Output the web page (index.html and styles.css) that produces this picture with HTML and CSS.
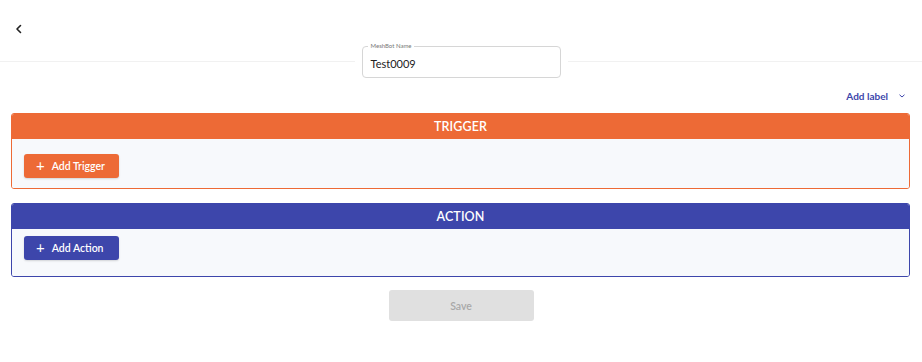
FILE: index.html
```html
<!DOCTYPE html>
<html>
<head>
<title>MeshBot</title>
<link rel="stylesheet" href="styles.css">
</head>
<body>
<div class="top">
    <a href="#back" class="back">
        <svg width="10" height="10" viewBox="0 0 10 10"><path d="M6.5 1.5 L3 5 L6.5 8.5" fill="none" stroke="#222" stroke-width="1.6" stroke-linecap="round" stroke-linejoin="round"/></svg>
    </a>
</div>

<div class="name-row">
    <div class="name-field">
        <span class="name-label">MeshBot Name</span>
        <span class="name-value">Test0009</span>
    </div>
</div>

<div class="label-row">
    <a href="#label" class="add-label">Add label</a>
    <svg class="chev" width="8" height="8" viewBox="0 0 8 8"><path d="M1.8 3 L4 5 L6.2 3" fill="none" stroke="#3d46ab" stroke-width="1" stroke-linecap="round"/></svg>
</div>

<div class="card trigger">
    <div class="card-head">TRIGGER</div>
    <div class="card-body">
        <button class="add-btn"><span class="plus">+</span>Add Trigger</button>
    </div>
</div>

<div class="card action">
    <div class="card-head">ACTION</div>
    <div class="card-body">
        <button class="add-btn"><span class="plus">+</span>Add Action</button>
    </div>
</div>

<div class="save-row">
    <button class="save" disabled>Save</button>
</div>
</body>
</html>
```

FILE: styles.css
```css
body {
    margin: 0;
    font-family: Lato, "Open Sans", sans-serif;
    background: #fff;
    color: #222;
}

.top {
    height: 61px;
    border-bottom: 1px solid #f1f1f1;
    display: flex;
    align-items: flex-start;
}

.back {
    display: flex;
    margin: 24px 0 0 14px;
}

.name-row {
    display: flex;
    justify-content: center;
    margin-top: -16px;
}

.name-field {
    position: relative;
    box-sizing: border-box;
    width: 199px;
    height: 32px;
    border: 1px solid #d6d6d6;
    border-radius: 4px;
    background: #fff;
    box-shadow: 0 0 0 7px #fff;
    display: flex;
    align-items: center;
    padding-left: 8px;
}

.name-label {
    position: absolute;
    top: -5px;
    left: 5px;
    padding: 0 3px;
    background: #fff;
    font-size: 6px;
    color: #777;
    line-height: 8px;
}

.name-value {
    font-size: 11px;
    color: #222;
    margin-top: 2px;
}

.label-row {
    display: flex;
    justify-content: flex-end;
    align-items: center;
    height: 35px;
    padding-right: 16px;
}

.add-label {
    font-size: 10px;
    font-weight: 700;
    color: #3d46ab;
    text-decoration: none;
}

.chev {
    margin-left: 10px;
}

.card {
    margin: 0 12px 0 11px;
    border: 1px solid;
    border-radius: 3px;
    overflow: hidden;
}

.card-head {
    height: 25px;
    display: flex;
    align-items: center;
    justify-content: center;
    color: #fff;
    font-size: 12.5px;
    font-weight: 600;
    letter-spacing: 0.1px;
}

.card-body {
    background: #f7f9fc;
    padding-left: 12px;
}

.trigger {
    border-color: #ed6a36;
    margin-bottom: 14px;
}
.trigger .card-head { background: #ed6a36; }
.trigger .card-body { padding-top: 15px; padding-bottom: 10px; }
.trigger .add-btn { background: #ed6a36; }

.action {
    border-color: #3d46ab;
}
.action .card-head { background: #3d46ab; }
.action .card-body { padding-top: 7px; padding-bottom: 16px; }
.action .add-btn { background: #3d46ab; }

.add-btn {
    width: 95px;
    height: 24px;
    border: none;
    border-radius: 3px;
    color: #fff;
    font-family: inherit;
    font-size: 10.5px;
    font-weight: 600;
    display: flex;
    align-items: center;
    padding: 0 0 0 12px;
    box-shadow: 0 1px 2px rgba(0,0,0,0.15);
}

.plus {
    font-size: 15px;
    font-weight: 400;
    margin-right: 7px;
    line-height: 1;
    margin-top: -2px;
}

.save-row {
    display: flex;
    justify-content: center;
    margin-top: 13px;
}

.save {
    width: 145px;
    height: 31px;
    border: none;
    border-radius: 3px;
    background: #e0e0e0;
    color: #a8a8a8;
    font-family: inherit;
    font-size: 10.5px;
    font-weight: 600;
}
```
